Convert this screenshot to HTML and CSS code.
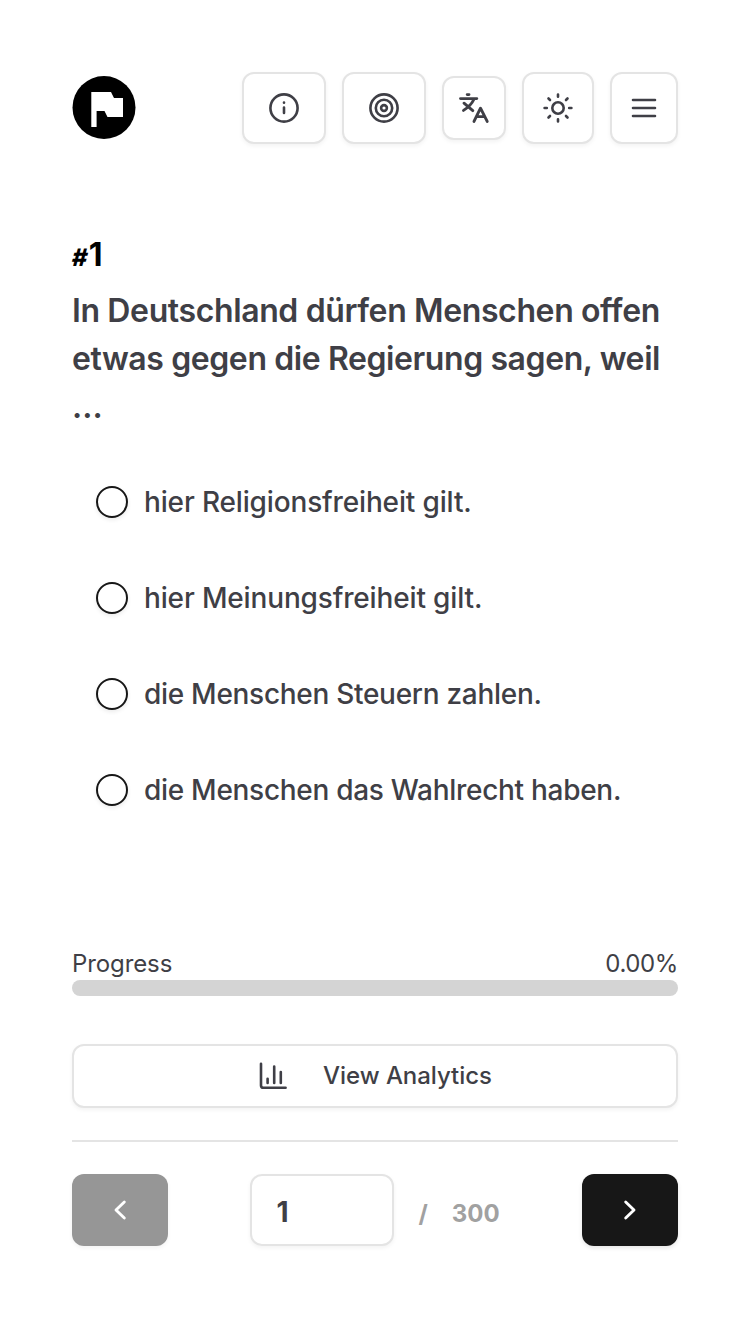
FILE: index.html
```html
<!DOCTYPE html>
<html lang="de">
<head>
<meta charset="utf-8">
<title>Quiz</title>
<link rel="stylesheet" href="styles.css">
</head>
<body>
<div class="page">
  <header class="header">
    <svg class="logo" viewBox="0 0 64 64"><circle cx="32" cy="31.5" r="31.5" fill="#000"/><path d="M19.3 16H39L42 22H51V41H35.5L32.5 35H24.6V51H19.3Z" fill="#fff"/></svg>
    <nav class="tools">
      <button class="box tool" aria-label="Info"><svg class="icon" viewBox="0 0 32 32"><circle cx="16" cy="16" r="13.6"/><path d="M16 15.6v5.4M16 10.6v.1"/></svg></button>
      <button class="box tool" aria-label="Target"><svg class="icon" viewBox="0 0 32 32"><circle cx="16" cy="16" r="13.6"/><circle cx="16" cy="16" r="8.2"/><circle cx="16" cy="16" r="2.9"/></svg></button>
      <button class="box tool tool-language" aria-label="Language"><svg class="icon" viewBox="0 0 32 32"><path d="M2.5 6.6H18.8M9.2 2.6h1.8M15.8 7.5C14 11.5 10 15.5 5.5 18.4M6 11.2 14.8 18.6M16 29.4 22.5 16.2 29.2 29.4M18.7 24.6H26.7"/></svg></button>
      <button class="box tool tool-theme" aria-label="Theme"><svg class="icon" viewBox="0 0 32 32"><circle cx="16" cy="16" r="5.7"/><path d="M16 2.6v2.2M16 27.2v2.2M2.6 16h2.2M27.2 16h2.2M6.5 6.5 8 8M24 24l1.5 1.5M25.5 6.5 24 8M8 24l-1.5 1.5"/></svg></button>
      <button class="box tool tool-menu" aria-label="Menu"><svg class="icon" viewBox="0 0 32 32"><path d="M5 8H27M5 16H27M5 24H27"/></svg></button>
    </nav>
  </header>
  <main>
    <div class="number"><span class="hash">#</span>1</div>
    <h1 class="question"><span class="line1">In Deutschland dürfen Menschen offen</span><br><span class="line2">etwas gegen die Regierung sagen, weil</span><br>...</h1>
    <div class="options">
      <label class="option"><span class="radio"></span><span class="snug">hier Religionsfreiheit gilt.</span></label>
      <label class="option"><span class="radio"></span><span class="snug">hier Meinungsfreiheit gilt.</span></label>
      <label class="option"><span class="radio"></span><span class="tight">die Menschen Steuern zahlen.</span></label>
      <label class="option"><span class="radio"></span><span class="tight">die Menschen das Wahlrecht haben.</span></label>
    </div>
  </main>
  <div class="progress-head"><span class="progress-label">Progress</span><span class="percent">0.00%</span></div>
  <div class="track"></div>
  <button class="box analytics"><svg class="icon" viewBox="0 0 32 32"><path d="M4 3.7V25.4Q4 27.8 6.4 27.8H28.6M10.6 18.7V23M17.2 6.6V23M23.8 12V23"/></svg><span>View Analytics</span></button>
  <footer class="pager">
    <button class="step step-prev" aria-label="Previous"><svg class="icon" viewBox="0 0 32 32"><path d="M20.3 8 12 16l8.3 8"/></svg></button>
    <div class="position"><div class="box field">1</div><span class="slash">/</span><span class="total">300</span></div>
    <button class="step" aria-label="Next"><svg class="icon" viewBox="0 0 32 32"><path d="M11.7 8 20 16l-8.3 8"/></svg></button>
  </footer>
</div>
</body>
</html>
```
FILE: styles.css
```css
* { box-sizing: border-box; }
body {
  margin: 0;
  background: #fff;
  color: #3f3f46;
  font-family: Inter, "Liberation Sans", sans-serif;
}
.page { width: 750px; height: 1334px; padding: 72px; }
button { margin: 0; padding: 0; font: inherit; color: inherit; }
.box {
  background: #fff;
  border: 2px solid #e4e4e4;
  border-radius: 12px;
  box-shadow: 0 2px 4px rgba(0, 0, 0, .05);
}
.icon {
  display: block;
  width: 32px;
  height: 32px;
  fill: none;
  stroke: currentColor;
  stroke-width: 2.6;
  stroke-linecap: round;
  stroke-linejoin: round;
}
.header { display: flex; justify-content: space-between; align-items: center; height: 72px; }
.logo { width: 64px; height: 64px; }
.tools { display: flex; align-items: center; gap: 16px; }
.tool { display: flex; align-items: center; justify-content: center; width: 84px; height: 72px; }
.tool-language { width: 64px; height: 64px; }
.tool-theme { width: 72px; }
.tool-menu { width: 68px; }
.number {
  margin-top: 88px;
  height: 48px;
  line-height: 46px;
  font-size: 32px;
  font-weight: 700;
  color: #000;
}
.hash { display: inline-block; margin-right: 1px; font-size: 24px; font-weight: 800; transform: skewX(-6deg); }
.question {
  margin: 7px 0 0;
  font-size: 32px;
  line-height: 48px;
  font-weight: 600;
  white-space: nowrap;
}
.line1 { letter-spacing: -.38px; }
.line2 { letter-spacing: -.41px; }
.options { margin: 39px 0 0 24px; display: flex; flex-direction: column; gap: 32px; }
.option {
  display: flex;
  align-items: center;
  gap: 16px;
  height: 64px;
  font-size: 28px;
  font-weight: 500;
  white-space: nowrap;
}
.snug { letter-spacing: -.15px; }
.tight { letter-spacing: -.29px; }
.radio {
  width: 32px;
  height: 32px;
  border: 2px solid #171717;
  border-radius: 50%;
  box-shadow: 0 2px 4px rgba(0, 0, 0, .08);
}
.progress-head {
  display: flex;
  justify-content: space-between;
  margin-top: 126px;
  height: 32px;
  font-size: 24px;
  line-height: 32px;
}
.progress-label { letter-spacing: -.1px; }
.percent { letter-spacing: -.4px; }
.track { height: 16px; border-radius: 8px; background: #d4d4d4; }
.analytics {
  display: flex;
  align-items: center;
  justify-content: center;
  gap: 34px;
  width: 100%;
  height: 64px;
  margin-top: 48px;
  padding-right: 1px;
  font-size: 24px;
  line-height: 30px;
  font-weight: 500;
  letter-spacing: -.05px;
}
.analytics span { margin-top: -1px; }
.tool-language .icon, .step .icon { stroke-width: 2.9; }
.pager {
  display: flex;
  justify-content: space-between;
  margin-top: 32px;
  padding-top: 32px;
  border-top: 2px solid #e4e4e4;
}
.step {
  display: flex;
  align-items: center;
  justify-content: center;
  width: 96px;
  height: 72px;
  border: 0;
  border-radius: 12px;
  background: #171717;
  color: #fff;
  box-shadow: 0 2px 4px rgba(0, 0, 0, .1);
}
.step-prev { background: #969696; box-shadow: 0 2px 4px rgba(0, 0, 0, .05); }
.position { display: flex; align-items: center; color: #a1a1a1; font-size: 24px; font-weight: 700; }
.field { width: 144px; height: 72px; padding-left: 24px; line-height: 72px; font-size: 28px; color: #3f3f46; }
.slash { margin: 6px 24px 0; }
.total { margin-top: 6px; }
```
